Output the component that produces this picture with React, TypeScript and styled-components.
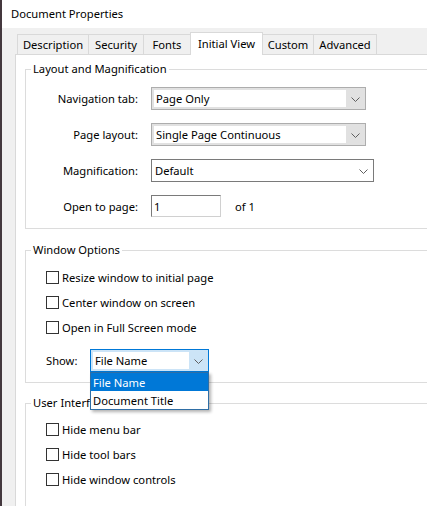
import React from 'react'
import styled, { createGlobalStyle, css } from 'styled-components'

type SelectKind = 'readonly' | 'plain' | 'focus'

const tabs = [
  { label: 'Description', width: 72 },
  { label: 'Security', width: 56 },
  { label: 'Fonts', width: 48 },
  { label: 'Initial View', width: 73, active: true },
  { label: 'Custom', width: 52 },
  { label: 'Advanced', width: 64 },
]

const Chevron = () => (
  <svg width='9' height='5' viewBox='0 0 9 5'>
    <polyline points='0.5,0.5 4.5,4.5 8.5,0.5' fill='none' stroke='#5f5f5f' strokeWidth='1' />
  </svg>
)

const Combo = ({ value, width, kind }: { value: string; width: number; kind: SelectKind }) => (
  <Div_Select $width={width} $kind={kind}>
    <Div_SelectField $kind={kind}>{value}</Div_SelectField>
    <Div_SelectArrow>
      <Chevron />
    </Div_SelectArrow>
  </Div_Select>
)

const Check = ({ label }: { label: string }) => (
  <Div_CheckRow>
    <Span_Box />
    <span>{label}</span>
  </Div_CheckRow>
)

export default function App() {
  return (
    <>
      <GlobalStyle />
      <Div_Window>
        <Div_LeftEdge />
        <Div_Dialog>
          <Div_TitleBar>Document Properties</Div_TitleBar>
          <Div_Body>
            <Div_TabStrip>
              {tabs.map((t) => (
                <Div_Tab key={t.label} $width={t.width} $active={!!t.active}>
                  {t.label}
                </Div_Tab>
              ))}
            </Div_TabStrip>
            <Div_Panel>
              <Fieldset_Group $top={6} $pad='10px 0 11px 0'>
                <Legend_Title>Layout and Magnification</Legend_Title>
                <Div_FormGrid>
                  <Label_Field>Navigation tab:</Label_Field>
                  <Combo value='Page Only' width={215} kind='readonly' />
                  <Label_Field>Page layout:</Label_Field>
                  <Combo value='Single Page Continuous' width={215} kind='readonly' />
                  <Label_Field>Magnification:</Label_Field>
                  <Combo value='Default' width={223} kind='plain' />
                  <Label_Field>Open to page:</Label_Field>
                  <Div_PageRow>
                    <Input_Page defaultValue='1' />
                    <span>of 1</span>
                  </Div_PageRow>
                </Div_FormGrid>
              </Fieldset_Group>

              <Fieldset_Group $top={13} $pad='7px 0 10px 0'>
                <Legend_Title>Window Options</Legend_Title>
                <Div_Options>
                  <Check label='Resize window to initial page' />
                  <Check label='Center window on screen' />
                  <Check label='Open in Full Screen mode' />
                  <Div_ShowRow>
                    <Span_ShowLabel>Show:</Span_ShowLabel>
                    <Div_ShowWrap>
                      <Combo value='File Name' width={119} kind='focus' />
                      <Ul_List>
                        <Li_Option $selected>File Name</Li_Option>
                        <Li_Option>Document Title</Li_Option>
                      </Ul_List>
                    </Div_ShowWrap>
                  </Div_ShowRow>
                </Div_Options>
              </Fieldset_Group>

              <Fieldset_Group $top={12} $pad='6px 0 40px 0'>
                <Legend_Title>User Interface Options</Legend_Title>
                <Div_Options>
                  <Check label='Hide menu bar' />
                  <Check label='Hide tool bars' />
                  <Check label='Hide window controls' />
                </Div_Options>
              </Fieldset_Group>
            </Div_Panel>
          </Div_Body>
        </Div_Dialog>
      </Div_Window>
    </>
  )
}

const GlobalStyle = createGlobalStyle`
  html, body {
    margin: 0;
    padding: 0;
    overflow: hidden;
    background: #f0f0f0;
  }
  body {
    font-family: "Noto Sans", "DejaVu Sans", sans-serif;
    font-size: 11.2px;
    color: #000;
  }
`

const Div_Window = styled.div`
  display: flex;
  width: 427px;
  height: 506px;
  overflow: hidden;
`

const Div_LeftEdge = styled.div`
  width: 2px;
  flex-shrink: 0;
  background: #44383e;
`

const Div_Dialog = styled.div`
  flex: 1;
  display: flex;
  flex-direction: column;
  min-width: 0;
`

const Div_TitleBar = styled.div`
  height: 28px;
  flex-shrink: 0;
  display: flex;
  align-items: center;
  padding: 0 0 2px 9px;
  box-sizing: border-box;
  background: #fff;
`

const Div_Body = styled.div`
  flex: 1;
  display: flex;
  flex-direction: column;
  padding: 4px 0 0 13px;
  background: #f0f0f0;
  min-height: 0;
`

const Div_TabStrip = styled.div`
  display: flex;
  align-items: flex-end;
  height: 22px;
  margin-left: 2px;
  position: relative;
  z-index: 1;
`

const Div_Tab = styled.div<{ $width: number; $active: boolean }>`
  width: ${(p) => p.$width}px;
  height: 20px;
  box-sizing: border-box;
  display: flex;
  align-items: center;
  justify-content: center;
  border: 1px solid #d9d9d9;
  border-bottom: none;
  background: #f0f0f0;
  white-space: nowrap;
  & + & {
    margin-left: -1px;
  }
  ${(p) =>
    p.$active &&
    css`
      height: 23px;
      margin-bottom: -1px;
      padding-bottom: 2px;
      background: #fff;
      position: relative;
      z-index: 2;
    `}
`

const Div_Panel = styled.div`
  flex: 1;
  width: 480px;
  position: relative;
  box-sizing: border-box;
  background: #fff;
  border: 1px solid #d9d9d9;
  padding: 0 0 0 9px;
`

const Fieldset_Group = styled.fieldset<{ $top: number; $pad: string }>`
  margin: ${(p) => p.$top}px 0 0 0;
  padding: ${(p) => p.$pad};
  border: 1px solid #dcdcdc;
  min-width: 0;
  width: 440px;
  box-sizing: border-box;
`

const Legend_Title = styled.legend`
  margin-left: 5px;
  padding: 0 2px;
  line-height: 16px;
`

const Div_Options = styled.div`
  padding-left: 20px;
`

const Div_FormGrid = styled.div`
  display: grid;
  grid-template-columns: 112px 1fr;
  column-gap: 13px;
  row-gap: 13px;
  align-items: center;
`

const Label_Field = styled.label`
  text-align: right;
  white-space: nowrap;
`

const selectKinds = {
  readonly: css`
    border-color: #adadad;
    background: #e1e1e1;
  `,
  plain: css`
    border-color: #7a7a7a;
    background: #fff;
  `,
  focus: css`
    border-color: #0078d7;
    background: #cce4f7;
  `,
}

const Div_Select = styled.div<{ $width: number; $kind: SelectKind }>`
  width: ${(p) => p.$width}px;
  height: 23px;
  box-sizing: border-box;
  display: flex;
  border: 1px solid;
  ${(p) => selectKinds[p.$kind]}
`

const Div_SelectField = styled.div<{ $kind: SelectKind }>`
  flex: 1;
  display: flex;
  align-items: center;
  white-space: nowrap;
  overflow: hidden;
  ${(p) =>
    p.$kind === 'plain'
      ? css`
          padding-left: 3px;
        `
      : css`
          margin: 2px 0 2px 2px;
          padding-left: 2px;
          background: #fff;
        `}
`

const Div_SelectArrow = styled.div`
  width: 19px;
  flex-shrink: 0;
  display: flex;
  align-items: center;
  justify-content: center;
  padding-top: 1px;
`

const Div_PageRow = styled.div`
  display: flex;
  align-items: center;
  gap: 14px;
`

const Input_Page = styled.input`
  width: 70px;
  height: 22px;
  box-sizing: border-box;
  margin: 0;
  padding: 0 2px;
  font: inherit;
  color: #000;
  border: 1px solid;
  border-color: #7a7a7a #d0d0d0 #d0d0d0 #7a7a7a;
  outline: none;
  background: #fff;
`

const Div_CheckRow = styled.div`
  height: 25px;
  display: flex;
  align-items: center;
  gap: 3px;
  white-space: nowrap;
`

const Span_Box = styled.span`
  width: 13px;
  height: 13px;
  box-sizing: border-box;
  border: 1px solid #333;
  background: #fff;
  flex-shrink: 0;
`

const Div_ShowRow = styled.div`
  margin-top: 9px;
  height: 23px;
  display: flex;
  align-items: center;
`

const Span_ShowLabel = styled.span`
  width: 44px;
`

const Div_ShowWrap = styled.div`
  position: relative;
`

const Ul_List = styled.ul`
  position: absolute;
  top: 100%;
  left: 0;
  width: 119px;
  box-sizing: border-box;
  margin: 0;
  padding: 0;
  list-style: none;
  background: #fff;
  border: 1px solid #2f6ea5;
  box-shadow: 2px 2px 3px rgba(0, 0, 0, 0.3);
  z-index: 5;
`

const Li_Option = styled.li<{ $selected?: boolean }>`
  height: 18px;
  display: flex;
  align-items: center;
  padding-left: 2px;
  white-space: nowrap;
  ${(p) =>
    p.$selected &&
    css`
      background: #0078d7;
      color: #fff;
    `}
`
